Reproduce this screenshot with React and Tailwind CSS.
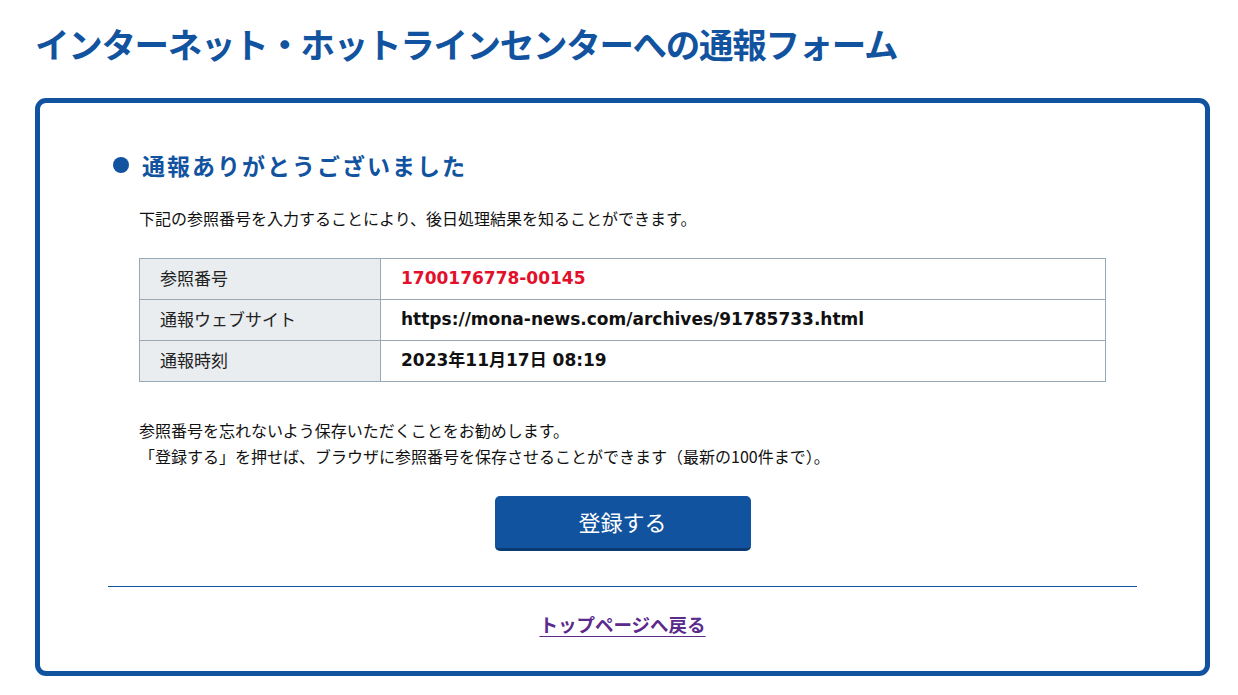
const jp = { fontFamily: '"Noto Sans CJK JP", sans-serif' };
const latin = { fontFamily: '"DejaVu Sans", "Noto Sans CJK JP", sans-serif' };

const rows = [
  { label: "参照番号", value: "1700176778-00145", red: true },
  { label: "通報ウェブサイト", value: "https://mona-news.com/archives/91785733.html" },
  { label: "通報時刻", value: "2023年11月17日 08:19" },
];

export default function App() {
  return (
    <div className="min-h-[695px] bg-white pl-[35px] pr-[28px]" style={jp}>
      <h1 className="pt-[22px] text-[34.5px] font-bold leading-[42px] tracking-[-1.3px] text-[#1253a0]">
        インターネット・ホットラインセンターへの通報フォーム
      </h1>

      <div className="mt-[34px] w-[1175px] rounded-[11px] border-[5px] border-[#1253a0] px-[68px] pt-[45px] pb-[34px]">
        <h2 className="flex items-center pl-[5px] text-[23px] font-bold leading-[34px] tracking-[2px] text-[#1253a0]">
          <span className="mr-[13px] inline-block h-[16px] w-[16px] rounded-full bg-[#1253a0]"></span>
          通報ありがとうございました
        </h2>

        <div className="px-[31px]">
          <p className="mt-[24px] text-[16px] leading-[24px] text-[#111]">
            下記の参照番号を入力することにより、後日処理結果を知ることができます。
          </p>

          <table className="mt-[28px] w-full border-collapse border border-[#98a8b4]">
            <tbody>
              {rows.map((r) => (
                <tr key={r.label} className="h-[41px]">
                  <td className="w-[241px] border border-[#98a8b4] bg-[#e9edf0] pb-[3px] pl-[20px] text-[17px] leading-[24px] text-[#222]">
                    {r.label}
                  </td>
                  <td
                    style={latin}
                    className={
                      "border border-[#98a8b4] pb-[2px] pl-[20px] text-[17px] leading-[24px] font-bold " +
                      (r.red ? "text-[#e3102b]" : "text-[#111]")
                    }
                  >
                    {r.value}
                  </td>
                </tr>
              ))}
            </tbody>
          </table>

          <p className="mt-[35px] text-[16px] leading-[26px] text-[#111]">
            参照番号を忘れないよう保存いただくことをお勧めします。
            <br />
            「登録する」を押せば、ブラウザに参照番号を保存させることができます（最新の100件まで）。
          </p>

          <div className="mt-[27px] flex justify-center">
            <button className="h-[55px] w-[256px] rounded-[5px] border-b-[3px] border-[#0b3a73] bg-[#1253a0] pb-[3px] text-[22px] leading-[30px] text-white">
              登録する
            </button>
          </div>
        </div>

        <hr className="mt-[35px] border-0 border-t border-[#1253a0]" />

        <div className="mt-[24px] flex justify-center">
          <a href="#" className="text-[18.5px] font-bold leading-[26px] text-[#5a2a8c] underline underline-offset-[4px]">
            トップページへ戻る
          </a>
        </div>
      </div>
    </div>
  );
}
